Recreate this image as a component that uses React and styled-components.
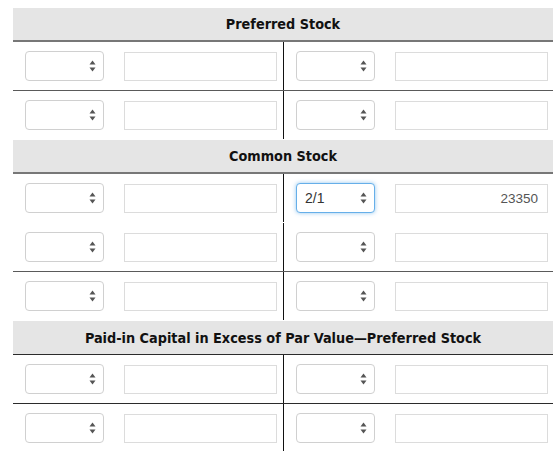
import React from 'react';
import styled, { createGlobalStyle } from 'styled-components';

const GlobalStyle = createGlobalStyle`
  html, body {
    margin: 0;
    padding: 0;
    background: #ffffff;
  }
  body {
    font-family: "Liberation Sans", Arial, sans-serif;
  }
`;

const Page = styled.div`
  padding: 8px 7px 0 13px;
  width: 540px;
`;

const Table = styled.div`
  display: flex;
  flex-direction: column;
`;

const SectionHead = styled.div`
  height: 34px;
  background: #e5e5e5;
  border-bottom: ${(p) => (p.$soft ? '2px solid #777' : '1px solid #2b2b2b')};
  box-sizing: border-box;
  display: flex;
  align-items: center;
  justify-content: center;
  font-family: "DejaVu Sans Condensed", "DejaVu Sans", Tahoma, sans-serif;
  font-weight: bold;
  font-size: 14.3px;
  color: #111;
`;

const Row = styled.div`
  display: grid;
  grid-template-columns: 271px 1fr;
  border-bottom: 1px solid
    ${(p) => (p.$line ? (p.$soft ? '#5a5a5a' : '#2b2b2b') : 'transparent')};
`;

const Half = styled.div`
  display: grid;
  grid-template-columns: 79px 153px;
  column-gap: 20px;
  align-items: center;
  padding: 9px 6px 9px 12px;
  border-right: ${(p) => (p.$divider ? '1px solid #111' : 'none')};
`;

const SelectBox = styled.div`
  position: relative;
  height: 30px;
  box-sizing: border-box;
  border: 1px solid ${(p) => (p.$focus ? '#66afe9' : '#d0d0d0')};
  border-radius: 4px;
  background: #fff;
  box-shadow: ${(p) =>
    p.$focus ? '0 0 4px rgba(102, 175, 233, 0.7)' : 'none'};
  display: flex;
  align-items: center;
  padding: 0 20px 0 8px;
  font-size: 14px;
  color: #333;
`;

const Arrows = styled.svg`
  position: absolute;
  right: 7px;
  top: 50%;
  transform: translateY(-50%);
`;

const Field = styled.div`
  height: 29px;
  box-sizing: border-box;
  border: 1px solid #dcdcdc;
  background: #fff;
  display: flex;
  align-items: center;
  justify-content: flex-end;
  padding: 0 9px;
  font-size: 13.5px;
  color: #555;
`;

const Select = ({ value, focus }) => (
  <SelectBox $focus={focus}>
    {value}
    <Arrows width="7" height="12" viewBox="0 0 7 12">
      <path d="M3.5 0.5 L6.5 4.6 L0.5 4.6 Z" fill="#555" />
      <path d="M3.5 11.5 L6.5 7.4 L0.5 7.4 Z" fill="#555" />
    </Arrows>
  </SelectBox>
);

const Entry = ({ divider, sel, num, focus }) => (
  <Half $divider={divider}>
    <Select value={sel} focus={focus} />
    <Field>{num}</Field>
  </Half>
);

const sections = [
  {
    title: 'Preferred Stock',
    soft: true,
    rows: [{ line: true }, { line: false }],
  },
  {
    title: 'Common Stock',
    soft: true,
    rows: [
      { line: false, right: { sel: '2/1', num: '23350', focus: true } },
      { line: true },
      { line: false },
    ],
  },
  {
    title: 'Paid-in Capital in Excess of Par Value\u2014Preferred Stock',
    soft: false,
    rows: [{ line: true }, { line: false }],
  },
];

export default function App() {
  return (
    <>
      <GlobalStyle />
      <Page>
        <Table>
          {sections.map((s) => (
            <React.Fragment key={s.title}>
              <SectionHead $soft={s.soft}>{s.title}</SectionHead>
              {s.rows.map((r, i) => (
                <Row key={i} $line={r.line} $soft={s.soft}>
                  <Entry divider />
                  <Entry {...(r.right || {})} />
                </Row>
              ))}
            </React.Fragment>
          ))}
        </Table>
      </Page>
    </>
  );
}
